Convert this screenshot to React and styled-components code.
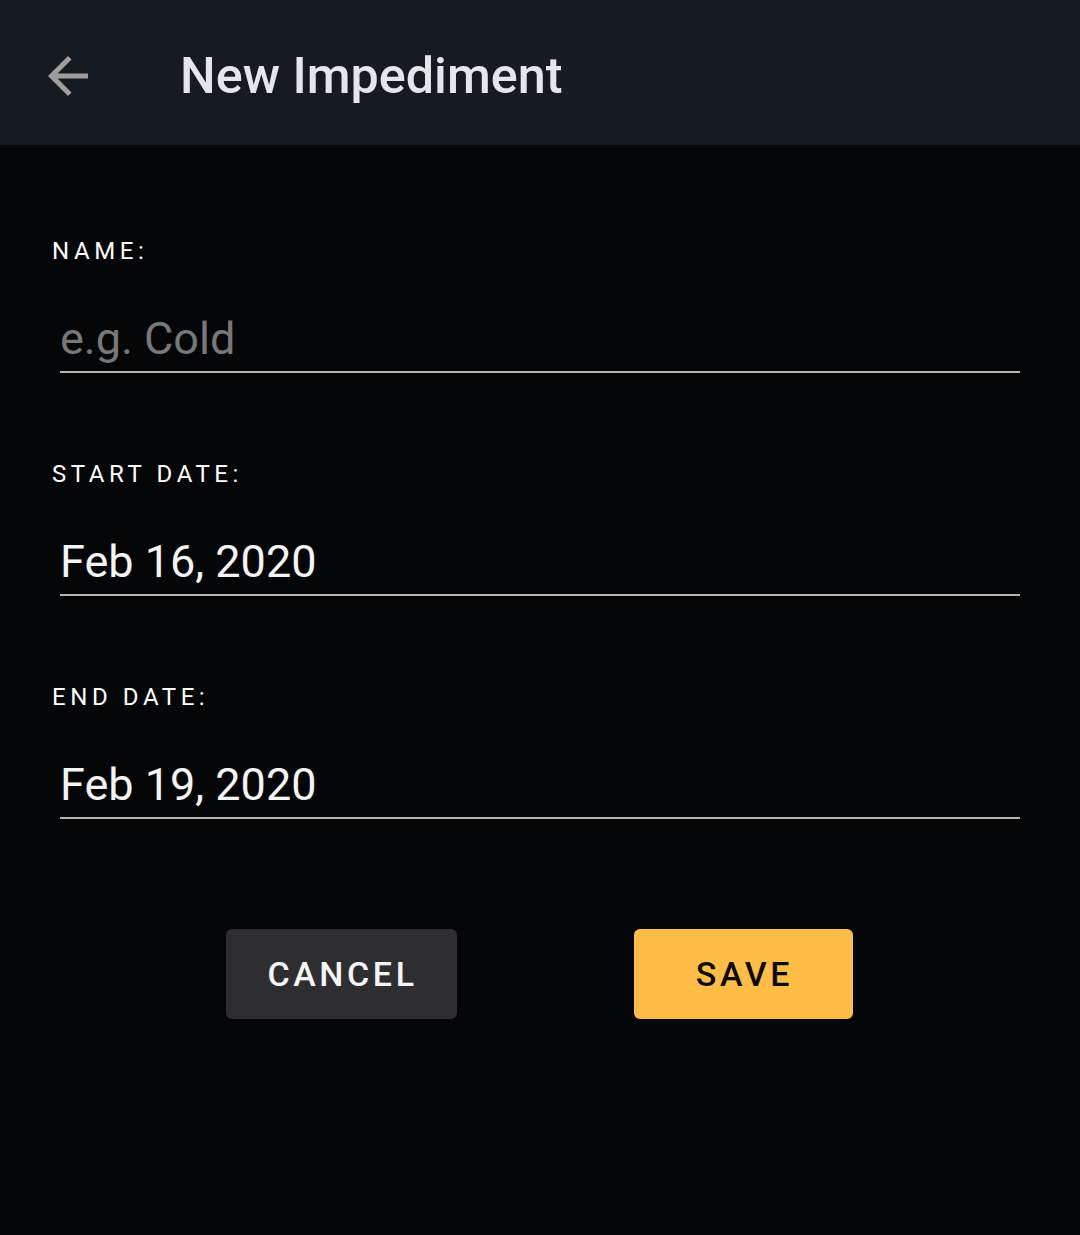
import React from "react";
import styled, { createGlobalStyle } from "styled-components";

const Global = createGlobalStyle`
  html, body { margin: 0; padding: 0; background: #050608; }
  body { font-family: Roboto, "Noto Sans", sans-serif; }
  * { box-sizing: border-box; }
`;

const Page = styled.div`
  width: 1080px;
  min-height: 1235px;
  background: #050608;
  display: flex;
  flex-direction: column;
`;

const TopBar = styled.header`
  height: 145px;
  background: #161a21;
  display: flex;
  align-items: center;
  padding-left: 38px;
`;

const BackButton = styled.button`
  width: 60px;
  height: 60px;
  padding: 0;
  margin-top: 7px;
  border: none;
  background: transparent;
  color: #9e9e9e;
  display: flex;
  cursor: pointer;
`;

const Title = styled.h1`
  margin: 0 0 0 82px;
  font-family: Roboto, sans-serif;
  font-weight: 500;
  font-size: 50.3px;
  line-height: 60px;
  color: #e4e6e9;
  padding-top: 6px;
`;

const Form = styled.form`
  display: flex;
  flex-direction: column;
  padding: 92px 60px 0 52px;
  gap: 87px;
`;

const Field = styled.div`
  display: flex;
  flex-direction: column;
`;

const Label = styled.label`
  font-size: 24px;
  line-height: 28px;
  letter-spacing: 4.6px;
  color: #ffffff;
  margin-bottom: 41px;
`;

const Input = styled.input`
  margin-left: 8px;
  height: 67px;
  padding: 0;
  border: none;
  border-bottom: 2px solid #b5b5b5;
  background: transparent;
  font-family: Roboto, sans-serif;
  font-size: 45px;
  line-height: 65px;
  color: #f4f4f4;
  outline: none;
  &::placeholder { color: #787878; }
`;

const Actions = styled.div`
  display: flex;
  justify-content: center;
  gap: 177px;
  margin-top: 110px;
  padding-right: 2px;
`;

const ActionButton = styled.button`
  height: 90px;
  width: ${(p) => p.$w}px;
  border: none;
  border-radius: 6px;
  background: ${(p) => (p.$primary ? "#ffbd45" : "#2e2e30")};
  color: ${(p) => (p.$primary ? "#0a0a0a" : "#f5f5f5")};
  font-family: Roboto, sans-serif;
  font-weight: 500;
  font-size: 34px;
  letter-spacing: 3.6px;
  text-transform: uppercase;
  cursor: pointer;
  padding: 0;
  padding-left: 3px;
`;

const ArrowIcon = () => (
  <svg width="60" height="60" viewBox="0 0 24 24" fill="currentColor">
    <path d="M20 11H7.83l5.59-5.59L12 4l-8 8 8 8 1.41-1.41L7.83 13H20v-2z" />
  </svg>
);

export default function App() {
  return (
    <Page>
      <Global />
      <TopBar>
        <BackButton aria-label="Back">
          <ArrowIcon />
        </BackButton>
        <Title>New Impediment</Title>
      </TopBar>
      <Form onSubmit={(e) => e.preventDefault()}>
        <Field>
          <Label htmlFor="name">NAME:</Label>
          <Input id="name" placeholder="e.g. Cold" />
        </Field>
        <Field>
          <Label htmlFor="start">START DATE:</Label>
          <Input id="start" defaultValue="Feb 16, 2020" />
        </Field>
        <Field>
          <Label htmlFor="end">END DATE:</Label>
          <Input id="end" defaultValue="Feb 19, 2020" />
        </Field>
      </Form>
      <Actions>
        <ActionButton $w={231}>Cancel</ActionButton>
        <ActionButton $w={219} $primary>Save</ActionButton>
      </Actions>
    </Page>
  );
}
